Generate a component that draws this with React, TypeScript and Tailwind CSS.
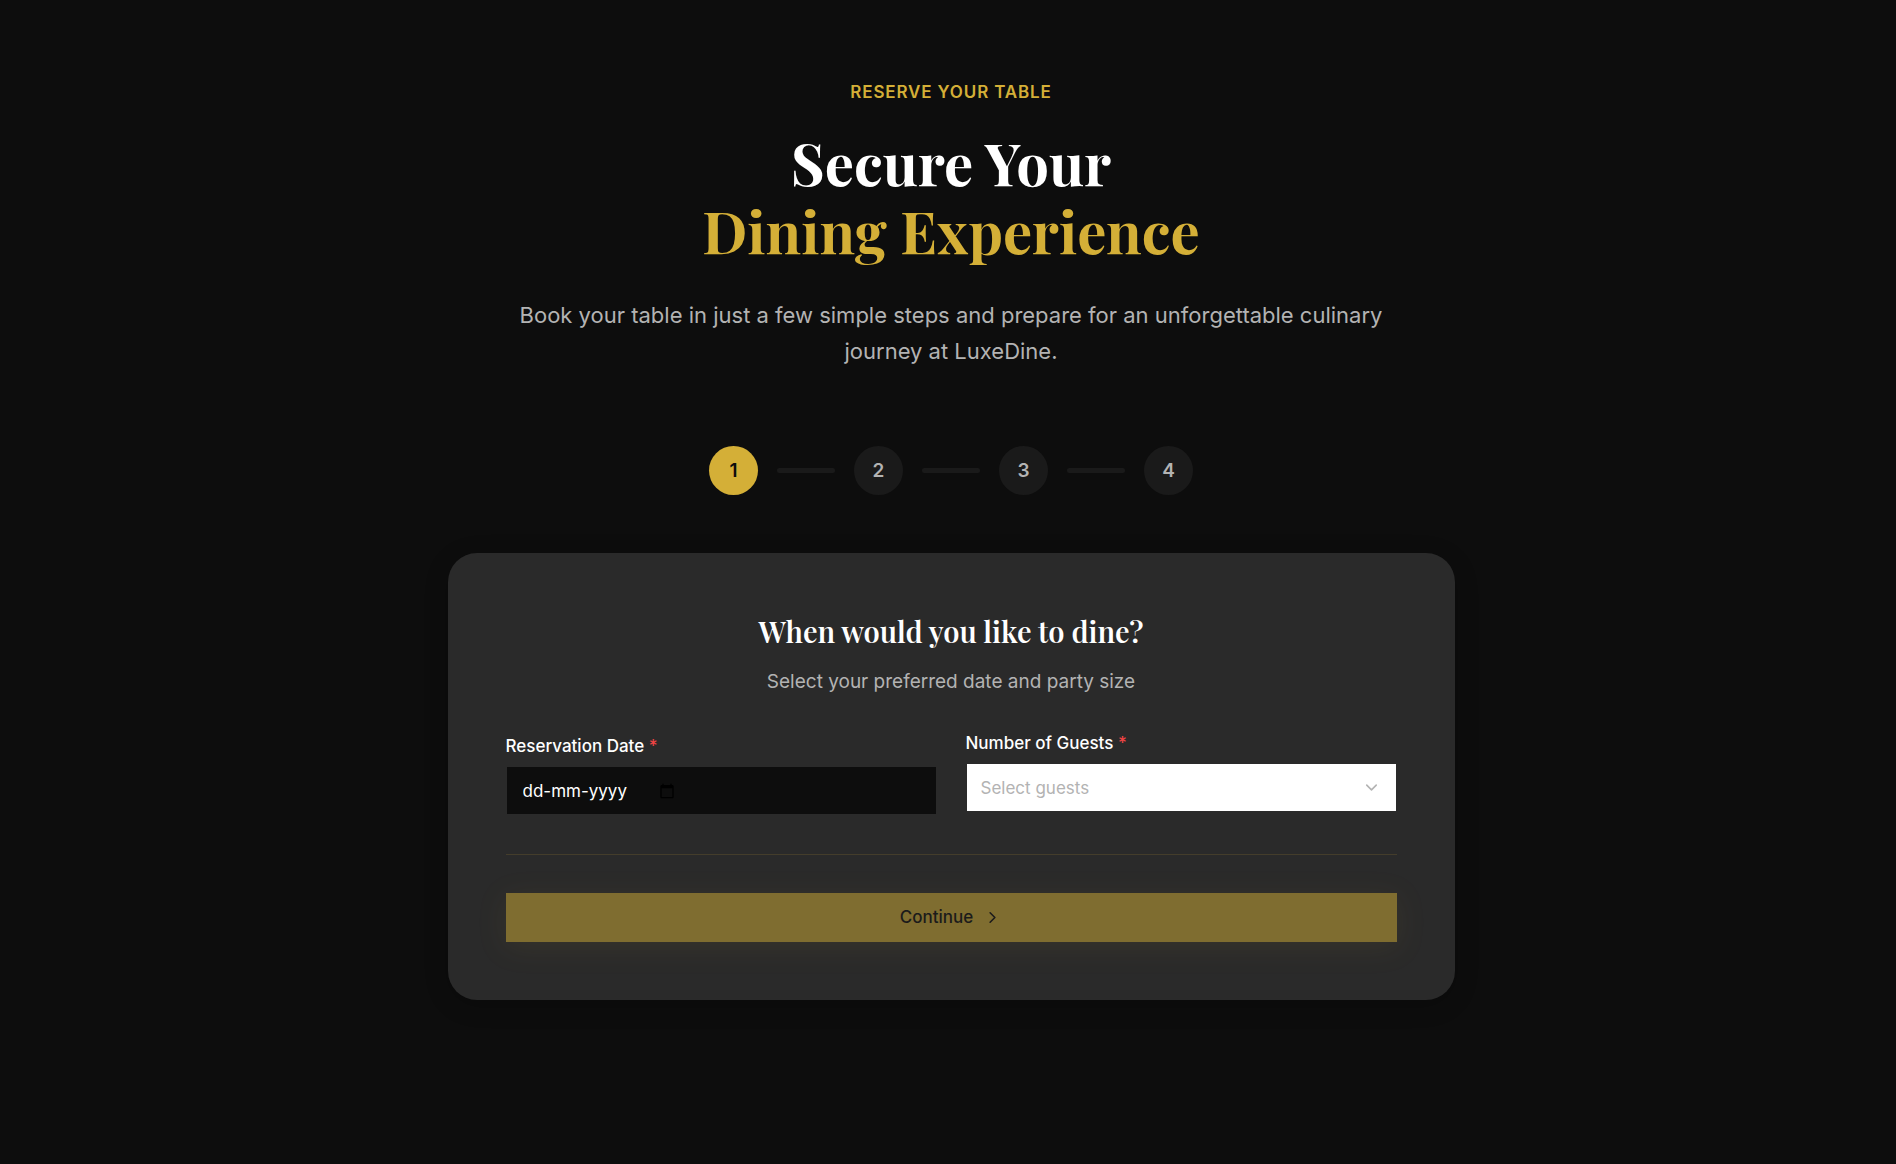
import { ChevronDown, ChevronRight } from "lucide-react";

const steps = [1, 2, 3, 4];

function Stepper({ current }: { current: number }) {
  return (
    <ol className="mt-[77px] flex items-center justify-center gap-[19px]" aria-label="Reservation steps">
      {steps.map((step) => (
        <li key={step} className="flex items-center gap-[19px]">
          <span
            aria-current={step === current ? "step" : undefined}
            className={
              step === current
                ? "flex size-[49px] items-center justify-center rounded-full bg-[#d4af37] pt-0.5 text-[19px] font-semibold text-[#0d0d0d]"
                : "flex size-[49px] items-center justify-center rounded-full bg-[#1a1a1a] pt-0.5 text-[19px] font-semibold text-[#b3b3b3]"
            }
          >
            {step}
          </span>
          {step < steps.length && <span className="h-[5px] w-[58px] rounded-full bg-[#1a1a1a]" />}
        </li>
      ))}
    </ol>
  );
}

function Required() {
  return <span className="text-[#ef4444]">*</span>;
}

function CalendarIcon() {
  return (
    <svg viewBox="0 0 24 24" className="size-4" fill="currentColor" aria-hidden="true">
      <path d="M20 3h-1V1h-2v2H7V1H5v2H4c-1.1 0-2 .9-2 2v16c0 1.1.9 2 2 2h16c1.1 0 2-.9 2-2V5c0-1.1-.9-2-2-2zm0 18H4V8h16v13z" />
    </svg>
  );
}

export default function App() {
  return (
    <main className="min-h-screen bg-[#0d0d0d] pt-20 pr-4 pb-24 pl-[22px] font-['Inter',sans-serif] text-white">
      <div className="mx-auto w-full max-w-[1007px]">
        <header className="text-center">
          <p className="text-[17px] leading-6 font-semibold tracking-wider text-[#d4af37] uppercase">
            Reserve Your Table
          </p>
          <h1 className="mt-6 font-['Playfair_Display','Liberation_Serif',serif] text-[58px] leading-[68px] font-bold">
            Secure Your
            <span className="block text-[#d4af37]">Dining Experience</span>
          </h1>
          <p className="mx-auto mt-[33px] max-w-[928px] text-[22px] leading-9 text-[#b3b3b3]">
            Book your table in just a few simple steps and prepare for an unforgettable culinary journey at LuxeDine.
          </p>
        </header>

        <Stepper current={1} />

        <form
          className="mt-[58px] rounded-[29px] bg-[#2a2a2a] p-[58px] shadow-[0_5px_24px_rgba(0,0,0,0.2)]"
          onSubmit={(event) => event.preventDefault()}
        >
          <h2 className="text-center font-['Playfair_Display','Liberation_Serif',serif] text-[29px] leading-10 font-semibold">
            When would you like to dine?
          </h2>
          <p className="mt-4 text-center text-[19px] leading-[30px] text-[#b3b3b3]">
            Select your preferred date and party size
          </p>

          <div className="mt-[34px] grid gap-[29px] md:grid-cols-2">
            <div className="pt-[3px]">
              <label htmlFor="date" className="block text-[17px] leading-6 font-medium">
                Reservation Date <Required />
              </label>
              <div className="mt-2 flex h-[49px] items-center border border-[#2a2a2a] bg-[#0d0d0d] px-4">
                <input
                  id="date"
                  type="text"
                  placeholder="dd-mm-yyyy"
                  className="w-[136px] bg-transparent text-[17px] leading-6 outline-none placeholder:text-white"
                />
                <button type="button" aria-label="Open calendar" className="text-black">
                  <CalendarIcon />
                </button>
              </div>
            </div>
            <div>
              <label htmlFor="guests" className="block text-[17px] leading-6 font-medium">
                Number of Guests <Required />
              </label>
              <div className="relative mt-2">
                <select
                  id="guests"
                  defaultValue=""
                  className="h-[49px] w-full appearance-none border border-[#2a2a2a] bg-white px-[14px] text-[17px] leading-6 text-[#b3b3b3] outline-none"
                >
                  <option value="">Select guests</option>
                  <option value="1">1 guest</option>
                  <option value="2">2 guests</option>
                  <option value="4">4 guests</option>
                </select>
                <ChevronDown
                  className="pointer-events-none absolute inset-y-0 right-4 my-auto size-[19px] text-[#b3b3b3]"
                  strokeWidth={2}
                />
              </div>
            </div>
          </div>

          <div className="mt-[39px] border-t border-[#443d2b] pt-[38px]">
            <button
              type="submit"
              disabled
              className="flex h-[49px] w-full items-center justify-center gap-[10px] bg-[#d4af37] text-[17px] font-medium text-[#0d0d0d] opacity-50 shadow-[0_5px_29px_rgba(212,175,55,0.15)]"
            >
              Continue
              <ChevronRight className="size-[19px]" strokeWidth={2} />
            </button>
          </div>
        </form>
      </div>
    </main>
  );
}
